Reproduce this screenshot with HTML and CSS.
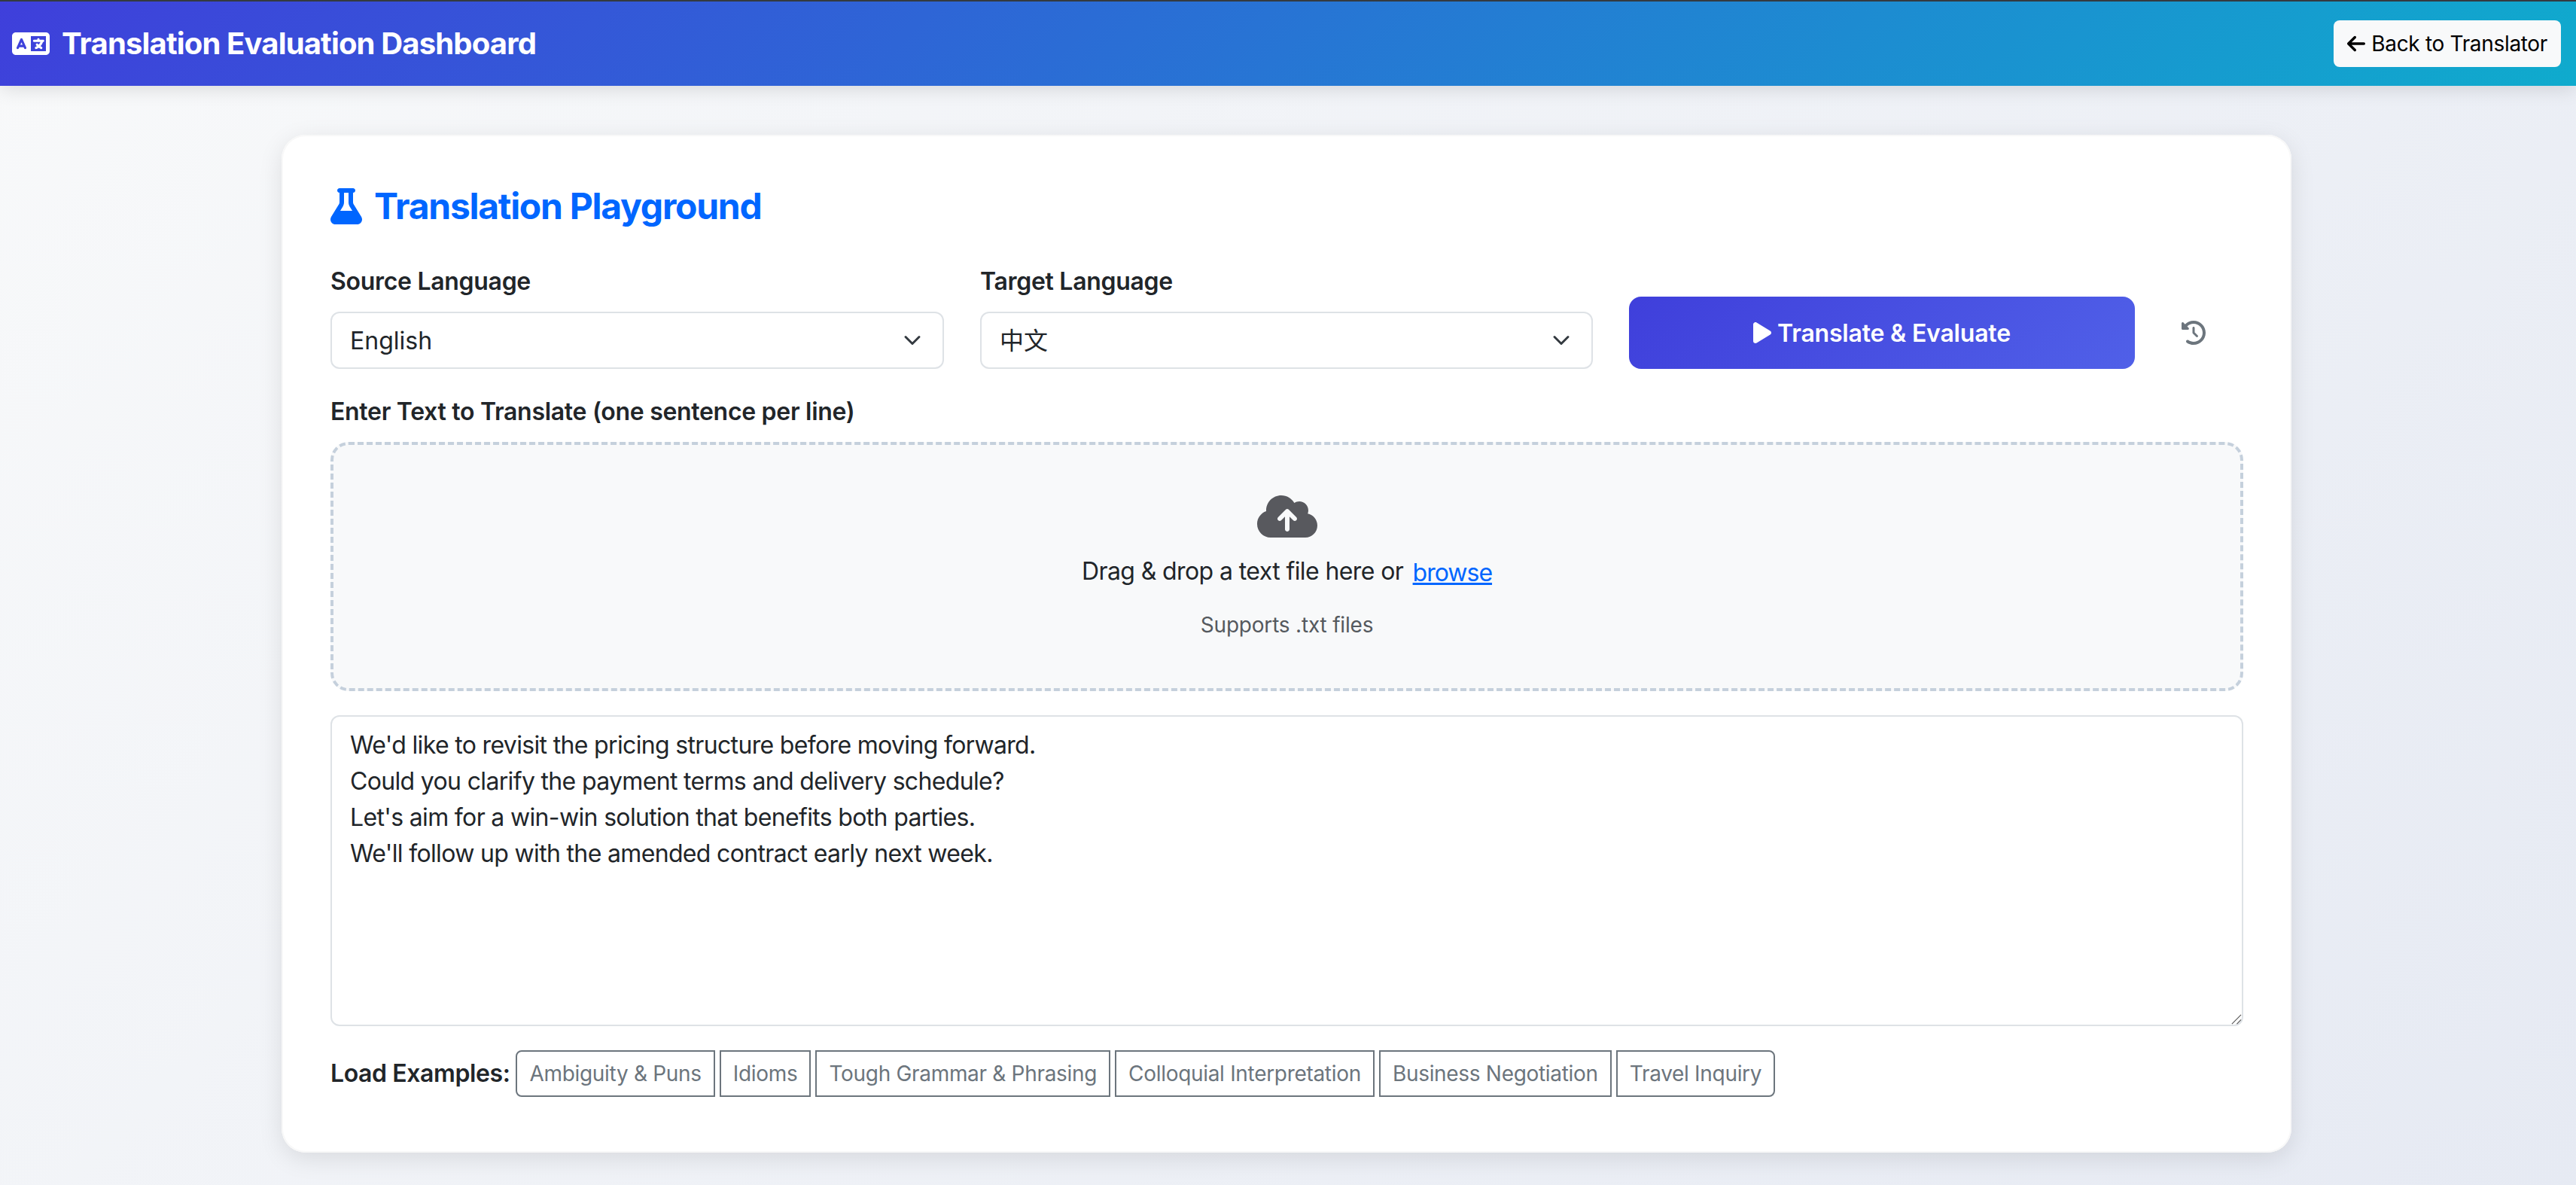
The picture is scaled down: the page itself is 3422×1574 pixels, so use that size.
FILE: index.html
```html
<!DOCTYPE html>
<html>
<head>
    <meta charset="utf-8">
    <title>Translation Evaluation Dashboard</title>
    <link rel="stylesheet" href="styles.css">
</head>
<body>
    <nav class="navbar">
        <div class="brand">
            <svg class="brand-icon" viewBox="0 0 640 512"><path fill="currentColor" d="M0 128C0 92.7 28.7 64 64 64H256h48 16H576c35.3 0 64 28.7 64 64V384c0 35.3-28.7 64-64 64H320 304 256 64c-35.3 0-64-28.7-64-64V128zm320 0V384H576V128H320zM178.3 175.9c-3.2-7.2-10.4-11.9-18.3-11.9s-15.1 4.7-18.3 11.9l-64 144c-4.5 10.1 .1 21.9 10.2 26.4s21.9-.1 26.4-10.2l8.9-20.1h73.6l8.9 20.1c4.5 10.1 16.3 14.6 26.4 10.2s14.6-16.3 10.2-26.4l-64-144zM160 233.2L179 276H141l19-42.8zM448 164c11 0 20 9 20 20v4h44 16c11 0 20 9 20 20s-9 20-20 20h-2l-1.6 4.5c-8.9 24.4-22.4 46.6-39.6 65.4c.9 .6 1.8 1.1 2.7 1.6l18.9 11.3c9.5 5.7 12.5 18 6.9 27.4s-18 12.5-27.4 6.9l-18.9-11.3c-4.5-2.7-8.8-5.5-13.1-8.5c-10.6 7.5-21.9 14-34 19.4l-3.6 1.6c-10.1 4.5-21.9-.1-26.4-10.2s.1-21.9 10.2-26.4l3.6-1.6c6.4-2.9 12.6-6.1 18.5-9.8L410 286.1c-7.8-7.8-7.8-20.5 0-28.3s20.5-7.8 28.3 0l14.6 14.6 .5 .5c12.4-13.1 22.5-28.3 29.8-45L448 228H376c-11 0-20-9-20-20s9-20 20-20h52v-4c0-11 9-20 20-20z"/></svg>
            <span>Translation Evaluation Dashboard</span>
        </div>
        <a class="back-btn" href="#">
            <svg class="back-icon" viewBox="0 0 448 512"><path fill="currentColor" d="M9.4 233.4c-12.5 12.5-12.5 32.8 0 45.3l160 160c12.5 12.5 32.8 12.5 45.3 0s12.5-32.8 0-45.3L109.2 288 416 288c17.7 0 32-14.3 32-32s-14.3-32-32-32l-306.7 0L214.6 118.6c12.5-12.5 12.5-32.8 0-45.3s-32.8-12.5-45.3 0l-160 160z"/></svg>
            Back to Translator
        </a>
    </nav>

    <main class="card">
        <h2 class="card-title">
            <svg class="flask-icon" viewBox="0 0 448 512"><path fill="currentColor" d="M288 0H160 128C110.3 0 96 14.3 96 32s14.3 32 32 32V196.8c0 11.8-3.3 23.5-9.5 33.5L10.3 406.2C3.6 417.2 0 429.7 0 442.6C0 480.9 31.1 512 69.4 512H378.6c38.3 0 69.4-31.1 69.4-69.4c0-12.8-3.6-25.4-10.3-36.4L329.5 230.4c-6.2-10.1-9.5-21.7-9.5-33.5V64c17.7 0 32-14.3 32-32s-14.3-32-32-32H288zM192 196.8V64h64V196.8c0 23.7 6.6 46.9 19 67.1L309.5 320h-171L173 263.9c12.4-20.2 19-43.4 19-67.1z"/></svg>
            Translation Playground
        </h2>

        <div class="controls">
            <div class="field">
                <label class="field-label" for="sourceLang">Source Language</label>
                <select class="select" id="sourceLang">
                    <option>English</option>
                </select>
            </div>
            <div class="field">
                <label class="field-label" for="targetLang">Target Language</label>
                <select class="select" id="targetLang">
                    <option>中文</option>
                </select>
            </div>
            <button class="translate-btn" type="button">
                <svg class="play-icon" viewBox="0 0 384 512"><path fill="currentColor" d="M73 39c-14.8-9.1-33.4-9.4-48.5-.9S0 62.6 0 80V432c0 17.4 9.4 33.4 24.5 41.9s33.7 8.1 48.5-.9L361 297c14.3-8.7 23-24.2 23-41s-8.7-32.2-23-41L73 39z"/></svg>
                Translate &amp; Evaluate
            </button>
            <button class="history-btn" type="button">
                <svg class="history-icon" viewBox="0 0 512 512"><path fill="currentColor" d="M75 75L41 41C25.9 25.9 0 36.6 0 57.9V168c0 13.3 10.7 24 24 24H134.1c21.4 0 32.1-25.9 17-41l-30.8-30.8C155 85.5 203 64 256 64c106 0 192 86 192 192s-86 192-192 192c-40.8 0-78.6-12.7-109.7-34.4c-14.5-10.1-34.4-6.6-44.6 7.9s-6.6 34.4 7.9 44.6C151.2 495 201.7 512 256 512c141.4 0 256-114.6 256-256S397.4 0 256 0C185.3 0 121.3 28.7 75 75zm181 53c-13.3 0-24 10.7-24 24V256c0 6.4 2.5 12.5 7 17l72 72c9.4 9.4 24.6 9.4 33.9 0s9.4-24.6 0-33.9l-65-65V152c0-13.3-10.7-24-24-24z"/></svg>
            </button>
        </div>

        <label class="field-label" for="inputText">Enter Text to Translate (one sentence per line)</label>
        <div class="dropzone">
            <svg class="cloud-icon" viewBox="0 0 640 512"><path fill="currentColor" d="M144 480C64.5 480 0 415.5 0 336c0-62.8 40.2-116.2 96.2-135.9c-.1-2.7-.2-5.4-.2-8.1c0-88.4 71.6-160 160-160c59.3 0 111 32.2 138.7 80.2C409.9 102 428.3 96 448 96c53 0 96 43 96 96c0 12.2-2.3 23.8-6.4 34.6C596 238.4 640 290.1 640 352c0 70.7-57.3 128-128 128H144zm79-217c-9.4 9.4-9.4 24.6 0 33.9s24.6 9.4 33.9 0l39-39V392c0 13.3 10.7 24 24 24s24-10.7 24-24V257.9l39 39c9.4 9.4 24.6 9.4 33.9 0s9.4-24.6 0-33.9l-80-80c-9.4-9.4-24.6-9.4-33.9 0l-80 80z"/></svg>
            <p class="drop-text">Drag &amp; drop a text file here or <a class="browse-link" href="#">browse</a></p>
            <p class="drop-hint">Supports .txt files</p>
        </div>

        <textarea class="text-input" id="inputText">We'd like to revisit the pricing structure before moving forward.
Could you clarify the payment terms and delivery schedule?
Let's aim for a win-win solution that benefits both parties.
We'll follow up with the amended contract early next week.</textarea>

        <div class="examples">
            <span class="examples-label">Load Examples:</span>
            <div class="example-group">
                <button class="example-btn" type="button">Ambiguity &amp; Puns</button>
                <button class="example-btn" type="button">Idioms</button>
                <button class="example-btn" type="button">Tough Grammar &amp; Phrasing</button>
                <button class="example-btn" type="button">Colloquial Interpretation</button>
                <button class="example-btn" type="button">Business Negotiation</button>
                <button class="example-btn" type="button">Travel Inquiry</button>
            </div>
        </div>
    </main>
</body>
</html>
```

FILE: styles.css
```css
* {
    box-sizing: border-box;
}

html, body {
    height: 100%;
}

body {
    margin: 0;
    overflow: hidden;
    font-family: Inter, "Noto Sans CJK SC", sans-serif;
    font-size: 32px;
    line-height: 1.5;
    color: #212529;
    background: linear-gradient(135deg, #f8f9fa 0%, #e6eaf3 100%);
}

.navbar {
    display: flex;
    align-items: center;
    justify-content: space-between;
    height: 114px;
    padding: 0 20px 0 16px;
    border-top: 2px solid #343a40;
    background: linear-gradient(135deg, #3f3fdb 0%, #0fabcd 100%);
    box-shadow: 0 4px 24px rgba(0, 0, 0, 0.12);
}

.brand {
    display: flex;
    align-items: center;
    gap: 16px;
    font-size: 40px;
    font-weight: 700;
    letter-spacing: -0.84px;
    color: #fff;
}

.brand-icon {
    width: 50px;
    height: 40px;
}

.back-btn {
    display: flex;
    align-items: center;
    gap: 8px;
    height: 62px;
    padding: 0 18px;
    border-radius: 8px;
    background: #f8f9fa;
    color: #000;
    font-size: 28px;
    letter-spacing: -0.33px;
    text-decoration: none;
}

.back-icon {
    width: 24px;
    height: 28px;
}

.card {
    width: 2670px;
    height: 1352px;
    margin: 65px 0 0 374px;
    padding: 66px 64px 0 65px;
    border-radius: 32px;
    background: #fff;
    box-shadow: inset 0 0 0 2px #f8f8f8, 0 8px 32px rgba(0, 0, 0, 0.1);
}

.card-title {
    display: flex;
    align-items: center;
    gap: 16px;
    margin: 0 0 47px;
    font-size: 48px;
    font-weight: 700;
    line-height: 58px;
    letter-spacing: -1.27px;
    color: #0066ff;
}

.flask-icon {
    width: 42px;
    height: 48px;
}

.controls {
    display: grid;
    grid-template-columns: 815px 814px 672px 1fr;
    column-gap: 48px;
    align-items: end;
    margin-bottom: 33px;
}

.field-label {
    display: block;
    margin-bottom: 16px;
    font-size: 32px;
    font-weight: 600;
    line-height: 48px;
    letter-spacing: -0.3px;
}

.select {
    display: block;
    width: 100%;
    height: 76px;
    padding: 0 24px;
    border: 2px solid #dee2e6;
    border-radius: 12px;
    background: #fff url("data:image/svg+xml,%3csvg xmlns='http://www.w3.org/2000/svg' viewBox='0 0 16 16'%3e%3cpath fill='none' stroke='%23343a40' stroke-linecap='round' stroke-linejoin='round' stroke-width='2' d='m2 5 6 6 6-6'/%3e%3c/svg%3e") no-repeat right 24px center / 32px 24px;
    font-family: inherit;
    font-size: 32px;
    color: #212529;
    appearance: none;
}

.translate-btn {
    display: flex;
    align-items: center;
    justify-content: center;
    gap: 8px;
    height: 96px;
    border: none;
    border-radius: 16px;
    background: linear-gradient(135deg, #3f3fdb 0%, #5060e8 100%);
    color: #fff;
    font-family: inherit;
    font-size: 32px;
    font-weight: 600;
    letter-spacing: -0.2px;
}

.play-icon {
    width: 24px;
    height: 32px;
}

.history-btn {
    display: flex;
    align-items: center;
    height: 96px;
    padding: 0 0 0 14px;
    border: none;
    background: none;
    color: #6c757d;
}

.history-icon {
    width: 32px;
    height: 32px;
}

.dropzone {
    display: flex;
    flex-direction: column;
    align-items: center;
    height: 331px;
    padding: 63px 0 0;
    border: 4px dashed #c5d0dc;
    border-radius: 24px;
    background: #f8f9fa;
}

.cloud-icon {
    width: 80px;
    height: 64px;
    color: #58595e;
}

.drop-text {
    margin: 17px 0 0;
    line-height: 48px;
    letter-spacing: -0.6px;
}

.browse-link {
    margin-left: 4px;
    letter-spacing: -1px;
    vertical-align: -2px;
    color: #0066ff;
}

.drop-hint {
    margin: 24px 0 0;
    font-size: 28px;
    line-height: 42px;
    letter-spacing: -0.2px;
    color: #55595e;
}

.text-input {
    display: block;
    width: 100%;
    height: 413px;
    margin-top: 32px;
    padding: 14px 24px;
    border: 2px solid #dee2e6;
    border-radius: 12px;
    font-family: inherit;
    font-size: 32px;
    line-height: 48px;
    letter-spacing: -0.66px;
    color: #212529;
}

.text-input::-webkit-resizer {
    background: url("data:image/svg+xml,%3csvg xmlns='http://www.w3.org/2000/svg' viewBox='0 0 16 16'%3e%3cpath fill='none' stroke='%23555' stroke-width='1.2' d='M2 15 15 2M9 15l6-6'/%3e%3c/svg%3e") no-repeat center / contain;
}

.examples {
    display: flex;
    align-items: center;
    gap: 8px;
    margin-top: 32px;
}

.examples-label {
    font-weight: 600;
    letter-spacing: -0.4px;
}

.example-group {
    display: flex;
    gap: 6px;
}

.example-btn {
    height: 62px;
    padding: 0 16px;
    border: 2px solid #6c757d;
    border-radius: 0;
    background: #fff;
    color: #6c757d;
    font-family: inherit;
    font-size: 28px;
    letter-spacing: -0.31px;
}

.example-btn:first-child {
    border-radius: 8px 0 0 8px;
}

.example-btn:last-child {
    border-radius: 0 8px 8px 0;
}
```
